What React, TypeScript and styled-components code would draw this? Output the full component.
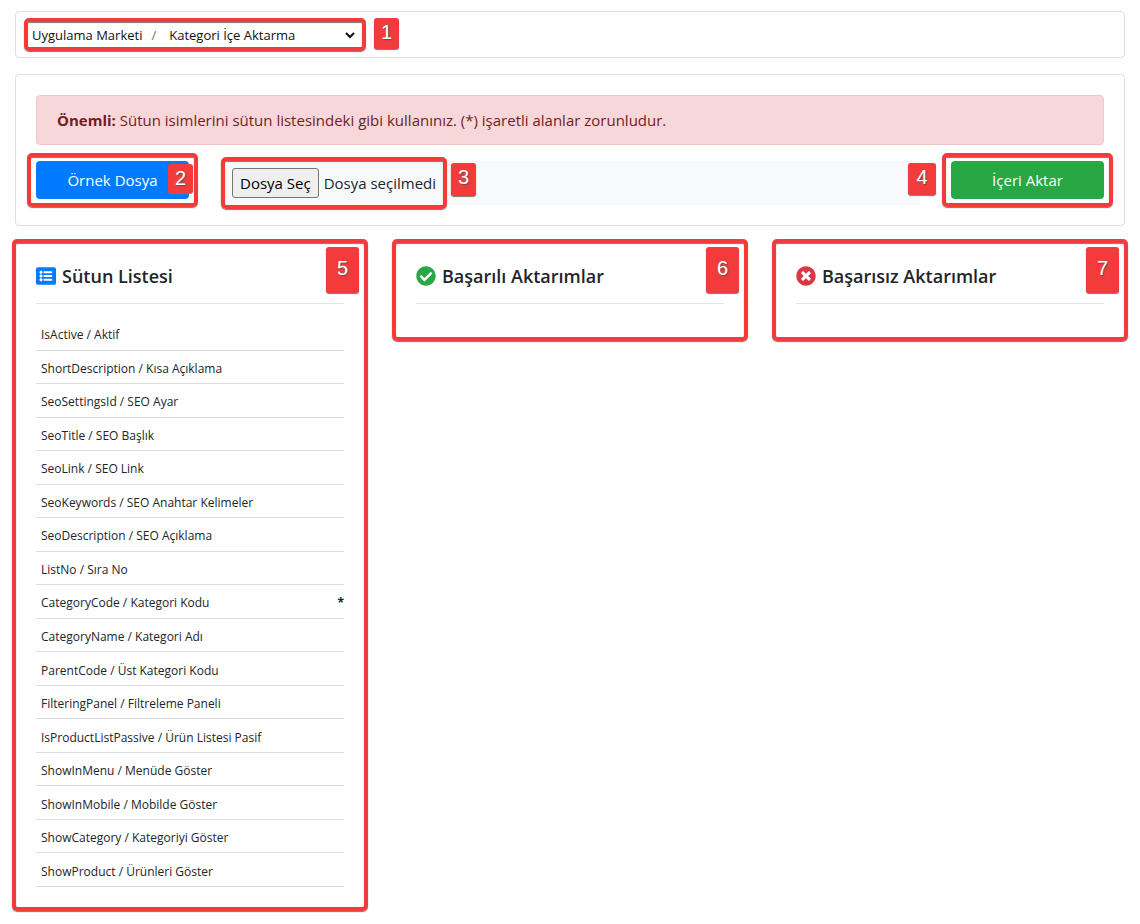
import React, { useState } from 'react';
import styled, { createGlobalStyle, css } from 'styled-components';
import { FaCheckCircle, FaListAlt, FaTimesCircle } from 'react-icons/fa';

const GlobalStyle = createGlobalStyle`
  *, *::before, *::after { box-sizing: border-box; }
  body {
    margin: 0;
    background: #fff;
    color: #212529;
    font-family: 'Open Sans', 'Noto Sans', sans-serif;
    font-size: 15px;
    line-height: 24px;
  }
`;

const Page = styled.div`
  display: flex;
  flex-direction: column;
  gap: 16px;
  padding: 11px 15px;
`;

const Card = styled.section`
  position: relative;
  border: 1px solid #dfdfdf;
  border-radius: 4px;
  background: #fff;
  padding: 20px;
`;

const marked = css`
  &::after {
    content: '';
    position: absolute;
    border: 4px solid #f33b3b;
    border-radius: 5px;
    box-shadow: 0 1px 1px #777, inset 0 1px 1px #777;
    pointer-events: none;
  }
`;

const TopBar = styled.header`
  display: flex;
  align-items: flex-start;
  gap: 8px;
  border: 1px solid #dfdfdf;
  border-radius: 4px;
  padding: 6px 8px;
`;

const Breadcrumb = styled.nav`
  position: relative;
  display: flex;
  align-items: center;
  width: 342px;
  height: 33px;
  padding: 0 8px;
  font-size: 13px;
  color: #111;
  ${marked}
  &::after { inset: 0; }
`;

const CrumbLink = styled.a`
  color: inherit;
  text-decoration: none;
`;

const Separator = styled.span`
  padding: 0 9px;
  color: #6c757d;
`;

const PageSelect = styled.select`
  flex: 1;
  min-width: 0;
  height: 24px;
  border: 0;
  background: #fff;
  color: #111;
  font: inherit;
`;

const Badge = styled.span<{ $w?: number; $h?: number }>`
  z-index: 2;
  flex: none;
  width: ${(p) => p.$w ?? 25}px;
  height: ${(p) => p.$h ?? 31}px;
  border-radius: 3px;
  background: #f33b3b;
  box-shadow: 0 1px 1px #777;
  color: #fff;
  font-family: 'Liberation Sans', sans-serif;
  font-size: 20px;
  line-height: 29px;
  text-align: center;
  text-shadow: 1px 1px 1px #555;
`;

const ButtonBadge = styled(Badge)`
  position: absolute;
  top: 3px;
  right: -4px;
`;

const FileBadge = styled(Badge)`
  position: absolute;
  top: -5px;
  right: -40px;
`;

const ImportBadge = styled(Badge)`
  position: absolute;
  top: 2px;
  left: -43px;
`;

const PanelBadge = styled(Badge)`
  position: absolute;
  top: 4px;
  right: 5px;
  line-height: 42px;
`;

const Alert = styled.p`
  margin: 0 0 16px;
  padding: 12px 20px;
  border: 1px solid #f5c6cb;
  border-radius: 4px;
  background: #f8d7da;
  color: #721c24;
`;

const Actions = styled.div`
  display: grid;
  grid-template-columns: repeat(12, 1fr);
  column-gap: 30px;
  align-items: start;
`;

const ButtonCell = styled.div`
  position: relative;
  grid-column: span 2;
  ${marked}
  &::after { inset: -8px -9px; }
`;

const ActionButton = styled.button<{ $color: string }>`
  display: block;
  width: 100%;
  height: 38px;
  border: 0;
  border-radius: 4px;
  background: ${(p) => p.$color};
  color: #fff;
  font: inherit;
  cursor: pointer;
`;

const FileField = styled.div`
  grid-column: span 8;
  display: flex;
  padding: 7px 13px;
  border-radius: 4px;
  background: #f8f9fa;
`;

const FileLabel = styled.label`
  position: relative;
  display: flex;
  align-items: center;
  gap: 5px;
  height: 30px;
  white-space: nowrap;
  ${marked}
  &::after { inset: -11px; }
`;

const FileInput = styled.input`
  position: absolute;
  width: 1px;
  height: 1px;
  opacity: 0;
`;

const FileTrigger = styled.span`
  padding: 2px 7px;
  border: 1px solid #767676;
  border-radius: 3px;
  background: #efefef;
  color: #000;
`;

const Panels = styled.main`
  display: grid;
  grid-template-columns: repeat(3, 1fr);
  gap: 30px;
  align-items: start;
`;

const Panel = styled(Card)`
  ${marked}
  &::after { inset: -4px; }
`;

const PanelTitle = styled.h2`
  display: flex;
  align-items: center;
  gap: 6px;
  margin: 0;
  padding-bottom: 14px;
  border-bottom: 1px solid #e3e3e3;
  font-size: 18px;
  font-weight: 600;
  line-height: 26px;
`;

const PanelBody = styled.div`
  padding-top: 13px;
`;

const ColumnList = styled.ul`
  display: grid;
  grid-auto-rows: 1fr;
  min-height: 570px;
  margin: 0;
  padding: 0;
  list-style: none;
`;

const ColumnItem = styled.li`
  display: flex;
  justify-content: space-between;
  align-items: center;
  padding: 4px 0 0 5px;
  border-bottom: 1px solid #dcdcdc;
  font-size: 12px;
  line-height: 20px;
`;

const columns = [
  'IsActive / Aktif',
  'ShortDescription / Kısa Açıklama',
  'SeoSettingsId / SEO Ayar',
  'SeoTitle / SEO Başlık',
  'SeoLink / SEO Link',
  'SeoKeywords / SEO Anahtar Kelimeler',
  'SeoDescription / SEO Açıklama',
  'ListNo / Sıra No',
  'CategoryCode / Kategori Kodu',
  'CategoryName / Kategori Adı',
  'ParentCode / Üst Kategori Kodu',
  'FilteringPanel / Filtreleme Paneli',
  'IsProductListPassive / Ürün Listesi Pasif',
  'ShowInMenu / Menüde Göster',
  'ShowInMobile / Mobilde Göster',
  'ShowCategory / Kategoriyi Göster',
  'ShowProduct / Ürünleri Göster',
];
const required = new Set(['CategoryCode / Kategori Kodu']);

export default function App() {
  const [fileName, setFileName] = useState('Dosya seçilmedi');

  return (
    <>
      <GlobalStyle />
      <Page>
        <TopBar>
          <Breadcrumb>
            <CrumbLink href="#market">Uygulama Marketi</CrumbLink>
            <Separator>/</Separator>
            <PageSelect aria-label="Uygulama">
              <option>Kategori İçe Aktarma</option>
            </PageSelect>
          </Breadcrumb>
          <Badge>1</Badge>
        </TopBar>

        <Card>
          <Alert>
            <strong>Önemli:</strong> Sütun isimlerini sütun listesindeki gibi kullanınız. (*) işaretli alanlar
            zorunludur.
          </Alert>
          <Actions>
            <ButtonCell>
              <ActionButton type="button" $color="#007bff">Örnek Dosya</ActionButton>
              <ButtonBadge $h={29}>2</ButtonBadge>
            </ButtonCell>
            <FileField>
              <FileLabel>
                <FileInput
                  type="file"
                  onChange={(e) => setFileName(e.target.files?.[0]?.name ?? 'Dosya seçilmedi')}
                />
                <FileTrigger>Dosya Seç</FileTrigger>
                <span>{fileName}</span>
                <FileBadge $h={33}>3</FileBadge>
              </FileLabel>
            </FileField>
            <ButtonCell>
              <ActionButton type="button" $color="#28a745">İçeri Aktar</ActionButton>
              <ImportBadge $w={28} $h={32}>4</ImportBadge>
            </ButtonCell>
          </Actions>
        </Card>

        <Panels>
          <Panel>
            <PanelTitle><FaListAlt size={20} color="#007bff" />Sütun Listesi</PanelTitle>
            <PanelBody>
              <ColumnList>
                {columns.map((name) => (
                  <ColumnItem key={name}>
                    <span>{name}</span>
                    {required.has(name) && <strong>*</strong>}
                  </ColumnItem>
                ))}
              </ColumnList>
            </PanelBody>
            <PanelBadge $w={33} $h={46}>5</PanelBadge>
          </Panel>
          <Panel>
            <PanelTitle><FaCheckCircle size={20} color="#28a745" />Başarılı Aktarımlar</PanelTitle>
            <PanelBody />
            <PanelBadge $w={33} $h={46}>6</PanelBadge>
          </Panel>
          <Panel>
            <PanelTitle><FaTimesCircle size={20} color="#dc3545" />Başarısız Aktarımlar</PanelTitle>
            <PanelBody />
            <PanelBadge $w={33} $h={46}>7</PanelBadge>
          </Panel>
        </Panels>
      </Page>
    </>
  );
}
